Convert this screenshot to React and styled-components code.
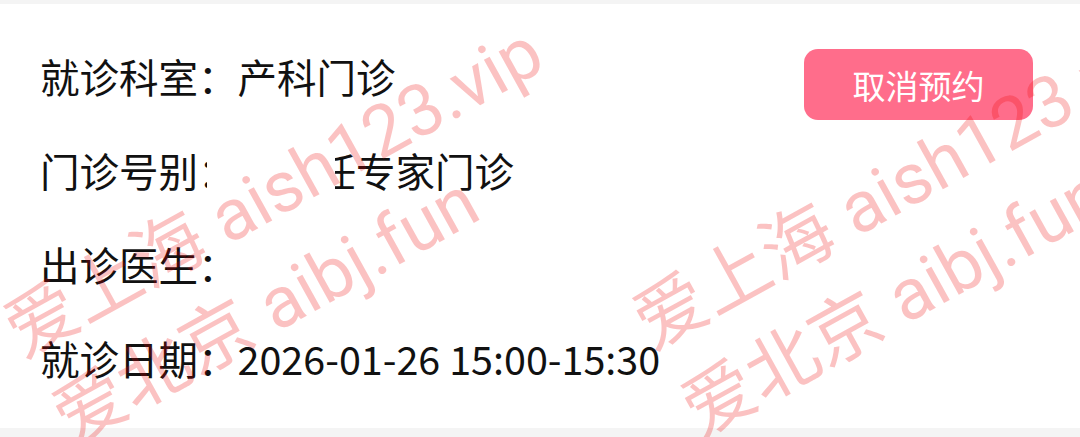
import styled, { createGlobalStyle } from "styled-components";

const GlobalStyle = createGlobalStyle`
  body {
    margin: 0;
    background: #f4f4f4;
    font-family: "Noto Sans CJK SC", "Noto Sans", sans-serif;
  }
`;

const Page = styled.div`
  position: relative;
  height: 437px;
  padding-top: 4px;
  box-sizing: border-box;
  background: #f4f4f4;
  overflow: hidden;
`;

const Card = styled.div`
  display: flex;
  justify-content: space-between;
  align-items: flex-start;
  height: 424px;
  padding: 24px 47px 0 40px;
  box-sizing: border-box;
  background: #fff;
`;

const InfoList = styled.div`
  display: flex;
  flex-direction: column;
`;

const Row = styled.div`
  position: relative;
  display: flex;
  align-items: center;
  height: 94px;
  font-size: 39.5px;
  color: #111;
  white-space: nowrap;
`;

const Label = styled.span``;
const Value = styled.span``;

// 截图里被白块挡住的一段
const Mask = styled.div`
  position: absolute;
  left: 167px;
  top: 21px;
  width: 128px;
  height: 58px;
  background: #fff;
`;

const CancelButton = styled.button`
  width: 229px;
  height: 71px;
  margin-top: 21px;
  border: none;
  border-radius: 14px;
  background: #ff6d8b;
  color: #fff;
  font-family: inherit;
  font-size: 33px;
  cursor: pointer;
`;

const WatermarkLayer = styled.div`
  position: absolute;
  inset: 0;
  pointer-events: none;
  overflow: hidden;
`;

const WatermarkBlock = styled.div`
  position: absolute;
  left: ${(p) => p.$x}px;
  top: ${(p) => p.$y}px;
  transform: rotate(-29deg);
  transform-origin: 0 0;
  color: rgba(240, 0, 0, 0.24);
  font-family: Roboto, "Noto Sans CJK SC", sans-serif;
  font-size: 72px;
  line-height: 100px;
  white-space: nowrap;
`;

const marks = [
  { x: -13, y: 294 },
  { x: 616, y: 286 },
];

export default function App() {
  return (
    <>
      <GlobalStyle />
      <Page>
        <Card>
          <InfoList>
            <Row>
              <Label>就诊科室：</Label>
              <Value>产科门诊</Value>
            </Row>
            <Row>
              <Label>门诊号别：</Label>
              <Value>副主任专家门诊</Value>
              <Mask />
            </Row>
            <Row>
              <Label>出诊医生：</Label>
              <Value></Value>
            </Row>
            <Row>
              <Label>就诊日期：</Label>
              <Value>2026-01-26 15:00-15:30</Value>
            </Row>
          </InfoList>
          <CancelButton>取消预约</CancelButton>
        </Card>
        <WatermarkLayer>
          {marks.map((m, i) => (
            <WatermarkBlock key={i} $x={m.x} $y={m.y}>
              <div>爱上海 aish123.vip</div>
              <div>爱北京 aibj.fun</div>
            </WatermarkBlock>
          ))}
        </WatermarkLayer>
      </Page>
    </>
  );
}
